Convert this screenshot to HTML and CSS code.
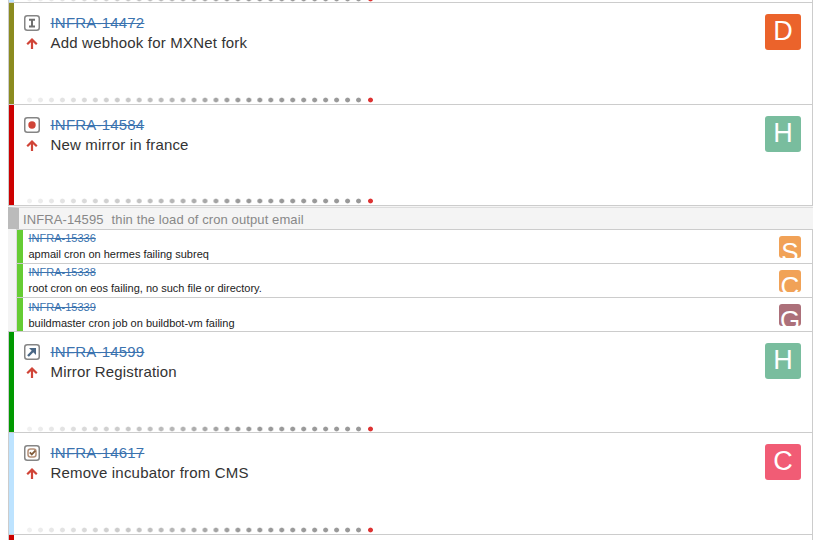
FILE: index.html
```
<!DOCTYPE html>
<html lang="en">
<head>
<meta charset="utf-8">
<title>Issues</title>
<link rel="stylesheet" href="styles.css">
</head>
<body>
<svg width="0" height="0" class="defs">
  <symbol id="up" viewBox="0 0 16 16"><path d="M8 13V4M3.2 8.2L8 3.6l4.8 4.6" fill="none" stroke="#d04437" stroke-width="2.2"/></symbol>
  <symbol id="frame" viewBox="0 0 16 16"><rect x=".75" y=".75" width="14.5" height="14.5" rx="2.5" fill="#fff" stroke="#858585" stroke-width="1.5"/></symbol>
</svg>
<main class="column">
  <div class="card peek sky"><div class="days"></div></div>

  <article class="card olive">
    <div class="icons">
      <svg class="icon" viewBox="0 0 16 16"><use href="#frame"/><path d="M5 4.7h6M5 11.5h6M8 4.7v6.8" fill="none" stroke="#6e6e6e" stroke-width="2"/></svg>
      <svg class="icon"><use href="#up"/></svg>
    </div>
    <div class="text"><a class="key">INFRA-14472</a><div class="summary s1">Add webhook for MXNet fork</div></div>
    <div class="avatar orange">D</div>
    <div class="days"></div>
  </article>

  <article class="card red short">
    <div class="icons">
      <svg class="icon" viewBox="0 0 16 16"><use href="#frame"/><circle cx="8" cy="8" r="3.7" fill="#d04437"/></svg>
      <svg class="icon"><use href="#up"/></svg>
    </div>
    <div class="text"><a class="key">INFRA-14584</a><div class="summary s2">New mirror in france</div></div>
    <div class="avatar mint">H</div>
    <div class="days"></div>
  </article>

  <section class="group">
    <header class="group-head"><span class="group-key">INFRA-14595</span><span class="group-title">thin the load of cron output email</span></header>
    <article class="sub"><div><a class="sub-key">INFRA-15336</a><div class="sub-text">apmail cron on hermes failing subreq</div></div><div class="mini amber">S</div></article>
    <article class="sub"><div><a class="sub-key">INFRA-15338</a><div class="sub-text">root cron on eos failing, no such file or directory.</div></div><div class="mini amber">C</div></article>
    <article class="sub low"><div><a class="sub-key">INFRA-15339</a><div class="sub-text">buildmaster cron job on buildbot-vm failing</div></div><div class="mini plum">G</div></article>
  </section>

  <article class="card green short">
    <div class="icons">
      <svg class="icon" viewBox="0 0 16 16"><use href="#frame"/><path d="M4 12l5.5-5.5" stroke="#4a6785" stroke-width="2.4"/><path d="M5 4h7v7z" fill="#4a6785"/></svg>
      <svg class="icon"><use href="#up"/></svg>
    </div>
    <div class="text"><a class="key">INFRA-14599</a><div class="summary s2">Mirror Registration</div></div>
    <div class="avatar mint">H</div>
    <div class="days"></div>
  </article>

  <article class="card sky">
    <div class="icons">
      <svg class="icon" viewBox="0 0 16 16"><use href="#frame"/><rect x="4" y="4" width="8" height="8" rx="2.5" fill="#fff" stroke="#b59078" stroke-width="1.5"/><path d="M5.8 7.3l2 2.1L11.4 5.6" fill="none" stroke="#815b3a" stroke-width="1.8"/></svg>
      <svg class="icon"><use href="#up"/></svg>
    </div>
    <div class="text"><a class="key">INFRA-14617</a><div class="summary s1">Remove incubator from CMS</div></div>
    <div class="avatar pink">C</div>
    <div class="days"></div>
  </article>
  <div class="card red tail"></div>
</main>
</body>
</html>
```
FILE: styles.css
```
* { box-sizing: border-box; }
body {
  margin: 0;
  height: 540px;
  overflow: hidden;
  background: #fff;
  font-family: "Liberation Sans", Arial, sans-serif;
  color: #333;
}
.defs { display: block; }
.column { width: 805px; margin-left: 8px; }
.card {
  display: grid;
  grid-template-columns: 5px 36.5px 1fr 36px;
  grid-template-rows: 1fr 6px;
  height: 102px;
  border: 1px solid #ccc;
  border-width: 1px 1px 0 1px;
  padding: 0 11px 1px 0;
  background: linear-gradient(var(--bar), var(--bar)) left / 5px 100% no-repeat #fff;
}
.short { height: 101px; }
.peek { height: 2px; border-top: 0; padding: 0; overflow: hidden; grid-template-rows: 0 2px; }
.peek .days { margin-top: -4px; }
.tail { height: 6px; padding: 0; }
.olive { --bar: #8b8b20; }
.red { --bar: #cc0000; }
.green { --bar: #009900; padding-bottom: 0; }
.sky { --bar: #bde3ff; }
.icons { grid-column: 2; padding: 12px 0 0 10px; }
.icon { display: block; width: 16px; height: 16px; margin-bottom: 5px; }
.text { padding-top: 10px; white-space: nowrap; }
.key, .summary { display: block; font-size: 15px; line-height: 20px; }
.key {
  width: max-content;
  color: #3b73af;
  text-decoration: line-through;
  text-decoration-skip-ink: none;
  letter-spacing: .2px;
}
.s1 { letter-spacing: .19px; }
.s2 { letter-spacing: .15px; }
.avatar {
  width: 36px;
  height: 36px;
  margin-top: 11px;
  border-radius: 3px;
  color: #fff;
  font-size: 27px;
  line-height: 35px;
  text-align: center;
}
.orange { background: #eb632b; }
.mint { background: #79bd9e; }
.pink { background: #f15c75; }
.amber { background: #f1a257; }
.plum { background: #ac707a; }
.days {
  grid-column: 2 / 4;
  position: relative;
  width: 352px;
  height: 6px;
  margin-left: 10px;
  background:
    linear-gradient(90deg, rgba(255,255,255,.88), rgba(255,255,255,0) 62%),
    radial-gradient(circle at 5.5px 3px, #999 2px, transparent 2.8px) 0 0 / 10.97px 6px repeat-x;
}
.days::after {
  content: "";
  position: absolute;
  right: 0;
  top: 0;
  width: 10px;
  height: 6px;
  background: radial-gradient(circle at 4.5px 3px, #d33 2px, #fff 2.8px);
}
.group { border-top: 1px solid #ccc; background: #f4f4f4; }
.group-head {
  display: flex;
  height: 22px;
  margin-top: 1px;
  padding: 3px 0 0 4px;
  border-left: 11px solid #bbb;
  border-top: 1px solid #ddd;
  font-size: 13px;
  line-height: 17px;
  letter-spacing: .1px;
  color: #888;
}
.group-title { margin-left: 8px; }
.sub {
  display: flex;
  justify-content: space-between;
  height: 34px;
  margin-left: 8px;
  border: 1px solid #ccc;
  border-bottom: 0;
  border-left: 1px solid #ddd;
  box-shadow: inset 6px 0 #66cc33;
  padding: 0 11px 0 11.5px;
  background: #fff;
  white-space: nowrap;
}
.sub-key, .sub-text { display: block; font-size: 11px; }
.sub-key {
  width: max-content;
  color: #3b73af;
  text-decoration: line-through;
  text-decoration-skip-ink: none;
  line-height: 17px;
}
.sub-text { color: #222; line-height: 15px; }
.low .sub-key { margin-top: 1px; }
.mini {
  display: flex;
  justify-content: center;
  width: 22px;
  height: 22px;
  margin-top: 6px;
  overflow: hidden;
  border-radius: 3px;
  color: #fff;
  font-size: 26px;
  line-height: 32px;
}
```
